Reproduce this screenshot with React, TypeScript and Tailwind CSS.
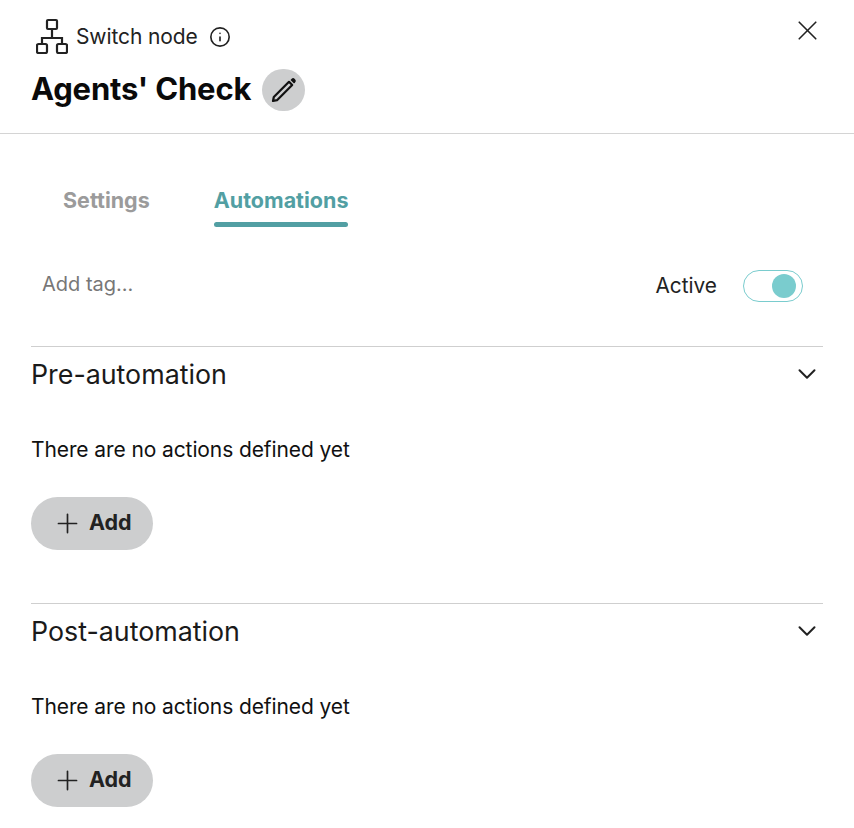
import { ChevronDown, Info, Plus, X } from 'lucide-react'

function NodeIcon() {
  return (
    <svg width="32" height="36" viewBox="0 0 32 36" fill="none" stroke="#222" strokeWidth="2.200">
      <rect x="11" y="2" width="10" height="9" rx="1" />
      <path d="M16 11v9M6 27v-7h20v7" />
      <rect x="1" y="26" width="10" height="9" rx="1.500" />
      <rect x="21" y="26" width="10" height="9" rx="1.500" />
    </svg>
  )
}

function PencilIcon() {
  return (
    <svg width="28" height="28" viewBox="0 0 28 28" fill="none" stroke="#111" strokeWidth="2.200" strokeLinejoin="round">
      <path d="M3 25l.8-4 15.200-15.200 3.200 3.200L7 24.200z" />
      <path d="M20.500 4l1.200-1.200a2 2 0 0 1 2.800 0l.7.7a2 2 0 0 1 0 2.800L24 7.500z" fill="#111" stroke="none" />
    </svg>
  )
}

function Section({ title }: { title: string }) {
  return (
    <section className="border-t border-[#cfcfcf] h-[257px]">
      <div className="flex items-center justify-between h-[54px] pr-[1px]">
        <h3 className="text-[26.800px] text-[#1a1a1a]">{title}</h3>
        <ChevronDown size={30} strokeWidth={1.600} color="#222" />
      </div>
      <p className="mt-[35px] text-[21px] leading-[28px] text-[#111] tracking-[-0.1px]">There are no actions defined yet</p>
      <button className="mt-[33px] flex items-center gap-[6px] w-[122px] h-[53px] pl-[21px] rounded-full bg-[#cdcecf] text-[21.500px] font-bold text-[#222]">
        <Plus size={31} strokeWidth={1.300} color="#222" />
        <span className="pb-[2px]">Add</span>
      </button>
    </section>
  )
}

export default function App() {
  return (
    <div className="w-[854px] h-[828px] overflow-hidden bg-white font-['Inter','Noto_Sans',sans-serif] text-[#111]">
      <header className="relative h-[134px] border-b border-[#d4d4d4] pl-[31px] pt-[18px]">
        <div className="flex items-center gap-[8px] pl-[5px]">
          <NodeIcon />
          <span className="pt-[2px] text-[21px] text-[#222] tracking-[-0.1px]">Switch node</span>
          <Info size={22} strokeWidth={1.800} color="#222" className="ml-[3px] mt-[2px]" />
        </div>
        <div className="mt-[12px] flex items-center gap-[11px]">
          <h1 className="text-[31px] font-bold tracking-[-0.2px] text-[#0a0a0a]">Agents' Check</h1>
          <button className="flex items-center justify-center w-[43px] h-[42px] mt-[1px] rounded-full bg-[#cdcecf]">
            <PencilIcon />
          </button>
        </div>
        <button className="absolute right-[30px] top-[14px]">
          <X size={33} strokeWidth={1.200} color="#222" />
        </button>
      </header>

      <nav className="flex gap-[64px] pl-[63px] pt-[50px]">
        <span className="text-[21.500px] leading-[32px] font-bold text-[#9b9b9b]">Settings</span>
        <div>
          <span className="block text-[21.500px] leading-[32px] font-bold text-[#529fa3]">Automations</span>
          <div className="mt-[6px] h-[5px] rounded-full bg-[#529fa3]" />
        </div>
      </nav>

      <div className="flex items-center justify-between pl-[42px] pr-[51px] mt-[43px] mb-[44px] h-[32px]">
        <span className="pb-[4px] text-[20px] text-[#777]">Add tag...</span>
        <div className="flex items-center gap-[26px]">
          <span className="text-[20.800px] text-[#222]">Active</span>
          <div className="flex items-center justify-end w-[60px] h-[32px] pr-[6px] rounded-full border border-[#7accce] bg-white">
            <div className="w-[24px] h-[24px] rounded-full bg-[#7accce]" />
          </div>
        </div>
      </div>

      <div className="mx-[31px]">
        <Section title="Pre-automation" />
        <Section title="Post-automation" />
      </div>
    </div>
  )
}
